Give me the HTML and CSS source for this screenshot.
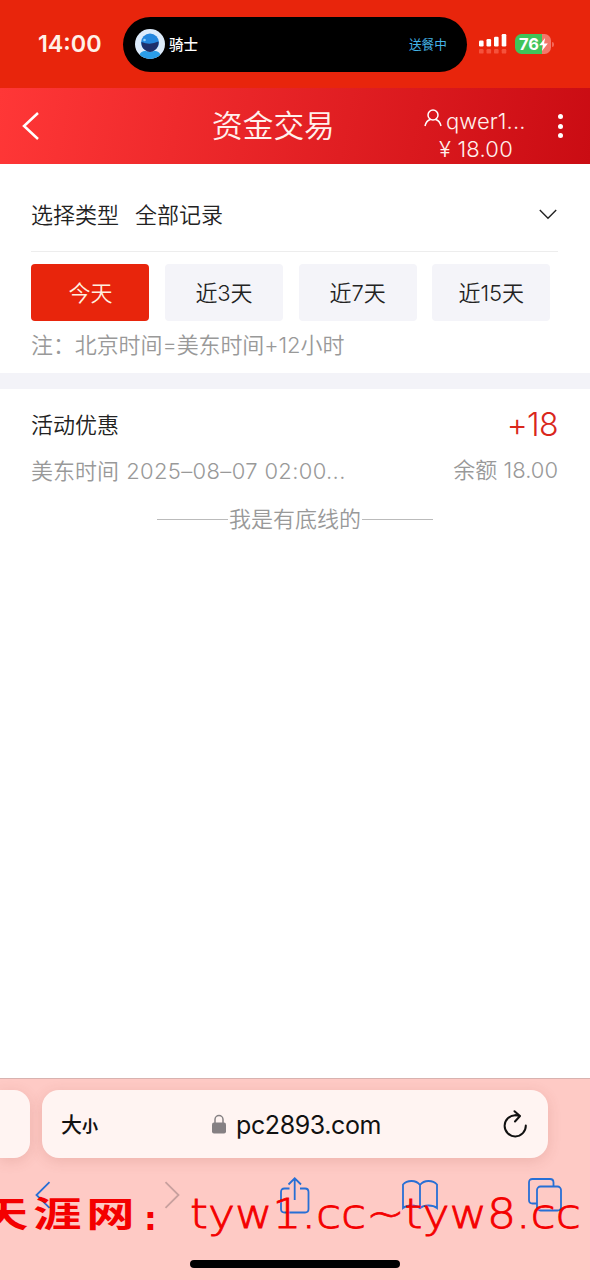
FILE: index.html
```html
<!DOCTYPE html>
<html lang="zh-CN">
<head>
<meta charset="utf-8">
<meta name="viewport" content="width=device-width, initial-scale=1">
<title>资金交易</title>
<link rel="stylesheet" href="styles.css">
</head>
<body>
<div class="screen">
  <header class="status">
    <span class="clock">14:00</span>
    <div class="island">
      <svg class="avatar" viewBox="0 0 30 30">
        <defs><clipPath id="face"><circle cx="15" cy="15" r="15"/></clipPath></defs>
        <g clip-path="url(#face)">
          <rect width="30" height="30" fill="#dcebfb"/>
          <path d="M4 30C4 22 9 21 15 23C21 21 26 22 26 30Z" fill="#2b9de8"/>
          <circle cx="15" cy="13.500" r="9" fill="#2487df"/>
          <path d="M6.500 13Q15 16.500 23.500 12.500Q24 18 20 21Q15 25 10 21Q6 18 6.500 13Z" fill="#1d2f6b"/>
          <circle cx="9.500" cy="11" r="1.300" fill="#8fd0ff"/>
        </g>
      </svg>
      <span class="rider">骑士</span>
      <span class="delivery">送餐中</span>
    </div>
    <svg class="signal" viewBox="0 0 28 20">
      <g fill="#fff"><rect x="0" y="6.500" width="4.600" height="6" rx="1.200"/><rect x="7.500" y="5" width="4.600" height="7.500" rx="1.200"/><rect x="15" y="2.700" width="4.600" height="9.800" rx="1.200"/><rect x="22.700" y="0" width="4.600" height="12.500" rx="1.200"/></g>
      <g fill="#f5523c"><rect x="0" y="15" width="4.600" height="4.600" rx="1.200"/><rect x="7.500" y="15" width="4.600" height="4.600" rx="1.200"/><rect x="15" y="15" width="4.600" height="4.600" rx="1.200"/><rect x="22.700" y="15" width="4.600" height="4.600" rx="1.200"/></g>
    </svg>
    <div class="battery">
      <span>76</span>
      <svg class="bolt" viewBox="0 0 8 12"><path d="M5.500 0L0 6.800H3.600L2.500 12L8 5H4.500Z" fill="#fff"/></svg>
    </div>
    <i class="battery-cap"></i>
  </header>

  <nav class="nav">
    <svg class="back" viewBox="0 0 18 30"><path d="M16 2L2 15L16 28" fill="none" stroke="#fff" stroke-width="2.500"/></svg>
    <h1 class="title">资金交易</h1>
    <div class="account">
      <div class="user">
        <svg class="user-icon" viewBox="0 0 18 18"><circle cx="9" cy="6" r="5" fill="none" stroke="#fff" stroke-width="1.500"/><path d="M1 17Q2.200 11.500 6.500 10.500M11.500 10.500Q15.800 11.500 17 17" fill="none" stroke="#fff" stroke-width="1.500"/></svg>
        <span class="username">qwer1...</span>
      </div>
      <div class="money">¥ 18.00</div>
    </div>
    <div class="more"><i></i><i></i><i></i></div>
  </nav>

  <section class="filter">
    <div class="type">
      <span class="label">选择类型</span>
      <span>全部记录</span>
      <svg class="down" viewBox="0 0 18 11"><path d="M.8 1L9 9.200L17.200 1" fill="none" stroke="#222" stroke-width="1.400"/></svg>
    </div>
    <div class="tabs">
      <button class="tab active">今天</button>
      <button class="tab">近3天</button>
      <button class="tab">近7天</button>
      <button class="tab">近15天</button>
    </div>
    <p class="note">注：北京时间=美东时间+12小时</p>
  </section>

  <main class="list">
    <div class="row first">
      <span>活动优惠</span>
      <span class="amount">+18</span>
    </div>
    <div class="row second">
      <span>美东时间 <span class="date">2025–08–07 02:00...</span></span>
      <span class="balance">余额 <span>18.00</span></span>
    </div>
    <div class="end">我是有底线的</div>
  </main>

  <footer class="browser">
    <div class="bars">
      <div class="previous"></div>
      <div class="address">
        <span class="size">大<small>小</small></span>
        <svg class="lock" viewBox="0 0 14 20"><path d="M3 9V5.500a4 4 0 0 1 8 0V9" fill="none" stroke="#858083" stroke-width="1.500"/><rect y="8.500" width="14" height="11" rx="2" fill="#858083"/></svg>
        <span class="host">pc2893.com</span>
        <svg class="reload" viewBox="0 0 24 28"><path d="M12.500 5.200A10.600 10.600 0 1 0 22.800 15.500" fill="none" stroke="#111" stroke-width="2" stroke-linecap="round"/><path d="M11.500 1.200L17 6L12 11.500M12.500 5.200L16 5.800" fill="none" stroke="#111" stroke-width="2" stroke-linecap="round" stroke-linejoin="round"/></svg>
      </div>
    </div>
    <div class="tools">
      <svg class="tool-back" viewBox="0 0 16 28"><path d="M14.500 1.200L1.500 14L14.500 26.800"/></svg>
      <svg class="tool-forward" viewBox="0 0 16 28"><path d="M1.500 1.200L14.500 14L1.500 26.800"/></svg>
      <svg class="tool-share" viewBox="0 0 30 37"><path d="M9.500 11.500H4.500Q1 11.500 1 15V32Q1 35.500 4.500 35.500H25Q28.500 35.500 28.500 32V15Q28.500 11.500 25 11.500H20M14.700 23V1.500M8.500 7.500L14.700 1.300L21 7.500"/></svg>
      <svg class="tool-book" viewBox="0 0 36 30"><path d="M18 5V28M18 5Q15 1 9.500 1Q4 1 1 4.500V28Q4 25.500 9.500 25.500Q15 25.500 18 28Q21 25.500 26.500 25.500Q32 25.500 35 28V4.500Q32 1 26.500 1Q21 1 18 5Z"/></svg>
      <svg class="tool-tabs" viewBox="0 0 34 34"><path d="M9 25.500H4.500Q1 25.500 1 22V4.500Q1 1 4.500 1H22Q25.500 1 25.500 4.500V8.500"/><rect x="9" y="8.500" width="24" height="24" rx="3.500"/></svg>
    </div>
    <div class="home"></div>
    <div class="watermark"><span class="mark-name">天涯网</span><span class="mark-colon">:</span><span class="mark-url">tyw1.cc~tyw8.cc</span></div>
  </footer>
</div>
</body>
</html>
```
FILE: styles.css
```css
* { box-sizing: border-box; }
body { margin: 0; background: #fff; color: #222; font: 350 22px/32px Inter, "Noto Sans CJK SC", sans-serif; }
svg { display: block; flex: none; }
.screen { width: 590px; height: 1280px; display: flex; flex-direction: column; overflow: hidden; }

.status { height: 88px; flex: none; background: #e8250c; display: flex; align-items: center; }
.clock { width: 85px; margin-left: 38px; color: #fff1e8; font-size: 23.3px; font-weight: 600; white-space: nowrap; }
.island { width: 344px; height: 55px; border-radius: 28px; background: #000; display: flex; align-items: center; padding: 0 20px 0 12px; }
.avatar { width: 30px; height: 30px; }
.rider { margin: 2px 0 0 4px; color: #fff; font-size: 14.5px; font-weight: 500; }
.delivery { margin: 1px 0 0 auto; color: #45b5e8; font-size: 12.7px; font-weight: 400; }
.signal { width: 28px; height: 20px; margin-left: 12px; }
.battery { width: 36px; height: 20px; margin-left: 8px; border-radius: 6.500px; background: linear-gradient(90deg, #3fc45a 27px, #f4776a 27px); color: #fff; font-size: 16.5px; font-weight: 700; line-height: 20px; display: flex; align-items: center; padding-left: 4px; }
.bolt { width: 9px; height: 13px; margin-left: 0; }
.battery-cap { width: 2px; height: 5px; margin-left: 1px; border-radius: 0 2px 2px 0; background: #f4685a; }

.nav { height: 76px; flex: none; background: linear-gradient(100deg, #ff3737, #ca0c13); color: #fff1ed; display: flex; align-items: center; }
.back { width: 18px; height: 30px; margin-left: 22px; }
.title { width: 124px; margin: 0 0 0 172px; font-size: 30.7px; font-weight: 350; line-height: 40px; white-space: nowrap; }
.account { width: 104px; margin-left: 89px; padding-top: 17px; }
.user { height: 28px; display: flex; align-items: center; white-space: nowrap; }
.user-icon { width: 18px; height: 18px; margin: -5px 4px 0 -1px; }
.username { font-size: 22px; letter-spacing: .1px; }
.money { height: 28px; line-height: 28px; padding-left: 14px; font-size: 22px; letter-spacing: .2px; white-space: nowrap; }
.more { display: flex; flex-direction: column; gap: 4.500px; margin-left: 17px; width: 30px; padding-left: 12px; }
.more i { width: 5px; height: 5px; border-radius: 50%; background: #fff; }

.filter { height: 225px; flex: none; padding: 0 32px 0 31px; border-bottom: 16px solid #f3f3f8; }
.type { height: 88px; padding-top: 14px; border-bottom: 1px solid #ededed; display: flex; align-items: center; }
.label { margin-right: 16px; }
.down { width: 18px; height: 11px; margin-left: auto; margin-right: 1px; }
.tabs { display: flex; gap: 15.6px; padding-top: 12px; margin-left: .4px; }
.tab { width: 118px; height: 57px; padding: 0; border: 0; border-radius: 4px; background: #f4f4f9; color: #222; font: inherit; letter-spacing: -.1px; }
.tab.active { background: #e8250c; color: #fff0e0; }
.note { margin: 8px 0 0; color: #999; letter-spacing: -.1px; white-space: nowrap; }

.list { flex: 1; padding: 19px 32px 0 31px; }
.row { display: flex; align-items: center; justify-content: space-between; white-space: nowrap; }
.first { height: 34px; }
.amount { color: #d9271c; font-size: 32px; letter-spacing: -.6px; }
.second { height: 32px; margin-top: 13px; color: #999; }
.date { margin-left: 1px; letter-spacing: .35px; }
.balance { padding-bottom: 2px; }
.end { margin: 16px 0 0 1px; color: #999; display: flex; align-items: center; justify-content: center; gap: 1px; }
.end::before, .end::after { content: ""; width: 71px; height: 1px; background: #bbb; }

.browser { position: relative; height: 202px; flex: none; border-top: 1px solid #d8b2af; background: #fecac5; overflow: hidden; }
.bars { display: flex; gap: 12px; padding-top: 11px; }
.previous, .address { height: 68px; background: #fff4f2; box-shadow: 0 3px 14px rgba(150, 60, 50, .16); }
.previous { width: 30px; border-radius: 0 16px 16px 0; }
.address { width: 506px; border-radius: 17px; display: flex; align-items: center; padding: 0 21px 0 19px; color: #111; }
.size { width: 151px; padding-top: 2px; font-size: 21px; font-weight: 500; }
.size small { font-size: 16px; font-weight: 700; }
.lock { width: 14px; height: 20px; }
.host { margin: 2px 0 0 10px; font-size: 25px; font-weight: 400; letter-spacing: -.4px; white-space: nowrap; }
.reload { width: 24px; height: 28px; margin-left: auto; }
.tools { display: flex; align-items: center; height: 40px; margin-top: 17px; padding-left: 35px; fill: none; stroke: #276fd5; stroke-width: 1.800; }
.tool-back { width: 16px; height: 28px; }
.tool-forward { width: 16px; height: 28px; margin-left: 113px; stroke: #c8a09e; }
.tool-share { width: 30px; height: 37px; margin-left: 100px; }
.tool-book { width: 36px; height: 30px; margin-left: 92px; }
.tool-tabs { width: 34px; height: 34px; margin-left: 90px; }
.home { width: 210px; height: 8px; margin: 45px auto 0; border-radius: 4px; background: #000; }
.watermark { position: absolute; left: -20px; top: 107px; height: 56px; display: flex; align-items: center; color: #f40000; line-height: 56px; white-space: nowrap; }
.mark-name { width: 164px; padding-bottom: 5px; font: 700 35px/52px "Noto Sans CJK SC", sans-serif; transform: scaleX(1.38); transform-origin: 0 50%; letter-spacing: 3.500px; }
.mark-colon { width: 46px; padding-top: 9px; font: 700 32px/56px "DejaVu Sans", sans-serif; }
.mark-url { font: 200 41px/54px "DejaVu Sans", sans-serif; letter-spacing: 0; transform: scaleX(1.115); transform-origin: 0 50%; -webkit-text-stroke: .8px #f40000; }
```
